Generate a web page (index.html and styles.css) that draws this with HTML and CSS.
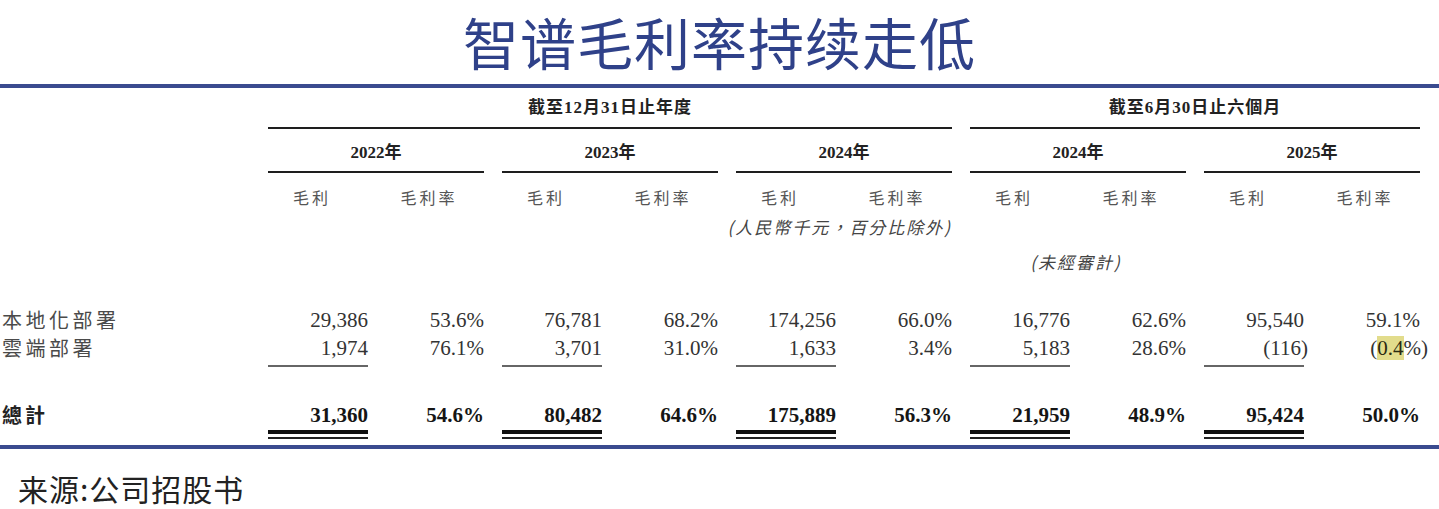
FILE: index.html
```html
<!DOCTYPE html>
<html lang="zh-Hant">
<head>
<meta charset="utf-8">
<title>智谱毛利率持续走低</title>
<link rel="stylesheet" href="styles.css">
</head>
<body>
<div class="page">
  <h1 class="title" lang="zh-Hans">智谱毛利率持续走低</h1>
  <div class="rule-blue"></div>

  <div class="row period">
    <div class="label"></div>
    <div class="cols">
      <div class="span3">截至12月31日止年度</div>
      <div class="span2">截至6月30日止六個月</div>
    </div>
  </div>

  <div class="row years">
    <div class="label"></div>
    <div class="cols">
      <div class="grp">2022年</div>
      <div class="grp">2023年</div>
      <div class="grp">2024年</div>
      <div class="grp">2024年</div>
      <div class="grp">2025年</div>
    </div>
  </div>

  <div class="row heads">
    <div class="label"></div>
    <div class="cols">
      <div class="grp"><div class="gp">毛利</div><div class="gr">毛利率</div></div>
      <div class="grp"><div class="gp">毛利</div><div class="gr">毛利率</div></div>
      <div class="grp"><div class="gp">毛利</div><div class="gr">毛利率</div></div>
      <div class="grp"><div class="gp">毛利</div><div class="gr">毛利率</div></div>
      <div class="grp"><div class="gp">毛利</div><div class="gr">毛利率</div></div>
    </div>
  </div>

  <div class="row note note-unit">
    <div class="label"></div>
    <div class="cols">
      <div class="span3">(人民幣千元，百分比除外)</div>
    </div>
  </div>

  <div class="row note note-audit">
    <div class="label"></div>
    <div class="cols">
      <div class="span3"></div>
      <div class="grp">(未經審計)</div>
    </div>
  </div>

  <div class="row data first">
    <div class="label">本地化部署</div>
    <div class="cols">
      <div class="grp"><div class="gp">29,386</div><div class="gr">53.6%</div></div>
      <div class="grp"><div class="gp">76,781</div><div class="gr">68.2%</div></div>
      <div class="grp"><div class="gp">174,256</div><div class="gr">66.0%</div></div>
      <div class="grp"><div class="gp">16,776</div><div class="gr">62.6%</div></div>
      <div class="grp"><div class="gp">95,540</div><div class="gr">59.1%</div></div>
    </div>
  </div>

  <div class="row data second">
    <div class="label">雲端部署</div>
    <div class="cols">
      <div class="grp"><div class="gp">1,974</div><div class="gr">76.1%</div></div>
      <div class="grp"><div class="gp">3,701</div><div class="gr">31.0%</div></div>
      <div class="grp"><div class="gp">1,633</div><div class="gr">3.4%</div></div>
      <div class="grp"><div class="gp">5,183</div><div class="gr">28.6%</div></div>
      <div class="grp"><div class="gp"><span class="hang-s">(116)</span></div><div class="gr"><span class="hang-l">(<span class="hl">0.4</span>%)</span></div></div>
    </div>
  </div>

  <div class="row data total">
    <div class="label">總計</div>
    <div class="cols">
      <div class="grp"><div class="gp">31,360</div><div class="gr">54.6%</div></div>
      <div class="grp"><div class="gp">80,482</div><div class="gr">64.6%</div></div>
      <div class="grp"><div class="gp">175,889</div><div class="gr">56.3%</div></div>
      <div class="grp"><div class="gp">21,959</div><div class="gr">48.9%</div></div>
      <div class="grp"><div class="gp">95,424</div><div class="gr">50.0%</div></div>
    </div>
  </div>

  <div class="rule-blue bottom"></div>

  <p class="source" lang="zh-Hans">来源:公司招股书</p>
</div>
</body>
</html>
```

FILE: styles.css
```css
* { box-sizing: border-box; }

body {
  margin: 0;
  background: #ffffff;
  font-family: "Liberation Serif", "Noto Sans CJK TC", serif;
  color: #333333;
}

.page {
  width: 1439px;
}

.title {
  margin: 0;
  height: 84px;
  font: 400 56px/81px "Noto Sans CJK SC", sans-serif;
  color: #2f4189;
  text-align: center;
  letter-spacing: 1px;
}

.rule-blue {
  height: 4px;
  background: #3a4b8f;
}

.row { display: flex; }

.label {
  width: 268px;
  flex: none;
  padding-left: 2px;
  font-family: "Noto Sans CJK TC", sans-serif;
}

.cols {
  display: flex;
  gap: 18px;
}

.grp {
  width: 216px;
  flex: none;
  display: flex;
}

.span3 { width: 684px; flex: none; }
.span2 { width: 450px; flex: none; }

.gp { width: 100px; flex: none; text-align: right; }
.gr { width: 116px; flex: none; text-align: right; }

/* header: period */
.period .span3,
.period .span2 {
  text-align: center;
  font: 700 17px/20px "Liberation Serif", "Noto Sans CJK TC", serif;
  letter-spacing: 1px;
  color: #222222;
  padding: 10px 0 9px;
  border-bottom: 2px solid #1e1e1e;
}

/* header: years */
.years .grp {
  justify-content: center;
  font: 700 17px/20px "Liberation Serif", "Noto Sans CJK TC", serif;
  color: #222222;
  padding: 14px 0 8px;
  border-bottom: 2px solid #1e1e1e;
}

/* header: column names */
.heads { padding-top: 13px; }
.heads .gp,
.heads .gr {
  font: 400 16px/22px "Noto Sans CJK TC", sans-serif;
  letter-spacing: 3px;
  color: #555555;
  text-align: center;
}
.heads .gp { padding-right: 12px; }
.heads .gr { padding-left: 6px; }

/* notes */
.note {
  font: italic 400 17px/22px "Noto Sans CJK TC", sans-serif;
  letter-spacing: 2px;
  color: #444444;
}
.note-unit { margin-top: 8px; }
.note-unit .span3 { text-align: right; }
.note-audit { margin-top: 13px; }
.note-audit .grp { justify-content: center; padding-right: 4px; }

/* data rows */
.data {
  font-size: 21px;
  line-height: 28px;
  color: #333333;
}
.data .label {
  font-size: 20px;
  letter-spacing: 3.5px;
  color: #4a4a4a;
}
.data.first { margin-top: 33px; }
.data.second .gp {
  padding-bottom: 3px;
  border-bottom: 2px solid #666666;
}

.hang-s { margin-right: -4px; }
.hang-l { margin-right: -8px; }
.hl {
  background: #e2dc8c;
  color: #2a2a10;
}

.data.total {
  margin-top: 34px;
  font-weight: 700;
  color: #151515;
}
.data.total .label {
  font-weight: 700;
  letter-spacing: 3px;
  color: #222222;
}
.data.total .gp {
  padding-bottom: 1px;
  border-bottom: 4px solid #111111;
  box-shadow: 0 3px 0 #ffffff, 0 5px 0 #222222;
}

.rule-blue.bottom { margin-top: 11px; }

.source {
  margin: 22px 0 0;
  padding-left: 18px;
  font: 400 30px/34px "Noto Sans CJK SC", sans-serif;
  letter-spacing: 1px;
  color: #222222;
}
```
